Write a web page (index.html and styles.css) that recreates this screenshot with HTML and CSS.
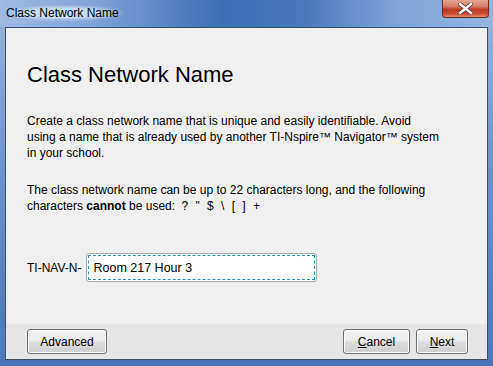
FILE: index.html
```html
<!DOCTYPE html>
<html lang="en">
<head>
  <meta charset="UTF-8" />
  <title>Class Network Name</title>
  <link rel="stylesheet" href="styles.css">
</head>
<body>

  <div class="window">
    <!-- TITLE BAR -->
    <div class="titlebar">
      <span class="title">Class Network Name</span>
      <div class="close">
        <svg width="15" height="11" viewBox="0 0 15 11">
          <path d="M2 1 L13 10 M13 1 L2 10" stroke="#5a3030" stroke-width="4" stroke-linecap="square"/>
          <path d="M2 1 L13 10 M13 1 L2 10" stroke="#ffffff" stroke-width="2.4" stroke-linecap="square"/>
        </svg>
      </div>
    </div>

    <!-- CLIENT AREA -->
    <div class="client">
      <div class="content">
        <h1>Class Network Name</h1>
        <p>Create a class network name that is unique and easily identifiable. Avoid<br>using a name that is already used by another TI-Nspire&trade; Navigator&trade; system<br>in your school.</p>
        <p>The class network name can be up to 22 characters long, and the following<br>characters <b>cannot</b> be used: <span class="chars">? " $ \ [ ] +</span></p>
        <div class="name-row">
          <label for="netname">TI-NAV-N-</label>
          <div class="field">
            <input type="text" id="netname" value="Room 217 Hour 3" />
          </div>
        </div>
      </div>
      <div class="footer">
        <button class="btn btn-wide">Advanced</button>
        <div class="spacer"></div>
        <button class="btn"><u>C</u>ancel</button>
        <button class="btn btn-next"><u>N</u>ext</button>
      </div>
    </div>
  </div>

</body>
</html>
```

FILE: styles.css
```css
body {
  margin: 0;
  padding: 0;
  font-family: "Liberation Sans", Arial, sans-serif;
}
.window {
  width: 493px;
  height: 366px;
  display: flex;
  flex-direction: column;
  background: linear-gradient(180deg, #9ab8e0 0%, #6f97cf 40%, #4977bb 100%);
  overflow: hidden;
}
.titlebar {
  height: 27px;
  display: flex;
  align-items: flex-start;
  background: linear-gradient(90deg, #9dbbe3 0%, #82a6d8 18%, #3e6db4 45%, #4c79bd 62%, #7ea3d6 80%, #96b5e0 100%);
}
.title {
  margin: 5px 0 0 6px;
  font-size: 12px;
  color: #000;
  padding: 1px 4px 1px 0;
  background: radial-gradient(ellipse at center, rgba(220, 235, 250, 0.75) 40%, rgba(220, 235, 250, 0) 75%);
}
.close {
  margin-left: auto;
  margin-right: 4px;
  width: 47px;
  height: 18px;
  box-sizing: border-box;
  border: 1px solid #6b2a22;
  border-top: none;
  border-radius: 0 0 4px 4px;
  background: linear-gradient(180deg, #e6a596 0%, #d47764 40%, #bf3b23 55%, #c94b34 80%, #e08c6c 100%);
  display: flex;
  align-items: center;
  justify-content: center;
}
.client {
  margin: 0 5px 0 5px;
  height: 333px;
  box-sizing: border-box;
  border: 1px solid #3c4f66;
  background: #f0f0f0;
  display: flex;
  flex-direction: column;
}
.content {
  flex: 1;
  padding: 0 21px;
}
h1 {
  font-size: 22px;
  font-weight: normal;
  color: #000;
  margin: 34px 0 25px;
  line-height: 26px;
}
p {
  font-size: 12px;
  line-height: 16px;
  margin: 0 0 21px;
  color: #000;
}
.chars {
  margin-left: 3px;
  word-spacing: 4px;
}
.name-row {
  display: flex;
  align-items: center;
  margin-top: 39px;
}
label {
  font-size: 12px;
  margin-right: 5px;
}
.field {
  width: 231px;
  height: 29px;
  box-sizing: border-box;
  border: 1px solid #a9adb3;
  border-radius: 3px;
  background: #fff;
  padding: 1px;
}
.field input {
  width: 100%;
  height: 100%;
  box-sizing: border-box;
  border: 1px dashed #2a93b8;
  outline: none;
  padding: 0 0 0 4px;
  font-family: "Liberation Sans", Arial, sans-serif;
  font-size: 12.5px;
  color: #000;
  background: #fff;
}
.footer {
  height: 35px;
  background: #e6e6e6;
  display: flex;
  align-items: center;
  padding: 0 19px 0 21px;
  gap: 6px;
}
.spacer {
  flex: 1;
}
.btn {
  height: 25px;
  width: 67px;
  border: 1px solid #707070;
  border-radius: 3px;
  background: linear-gradient(180deg, #f3f3f3 0%, #ebebeb 48%, #dddddd 52%, #cfcfcf 100%);
  box-shadow: inset 0 0 0 1px #fcfcfc;
  font-family: "Liberation Sans", Arial, sans-serif;
  font-size: 12px;
  color: #000;
  padding: 0;
}
.btn-wide {
  width: 80px;
}
.btn-next {
  width: 52px;
}
```
